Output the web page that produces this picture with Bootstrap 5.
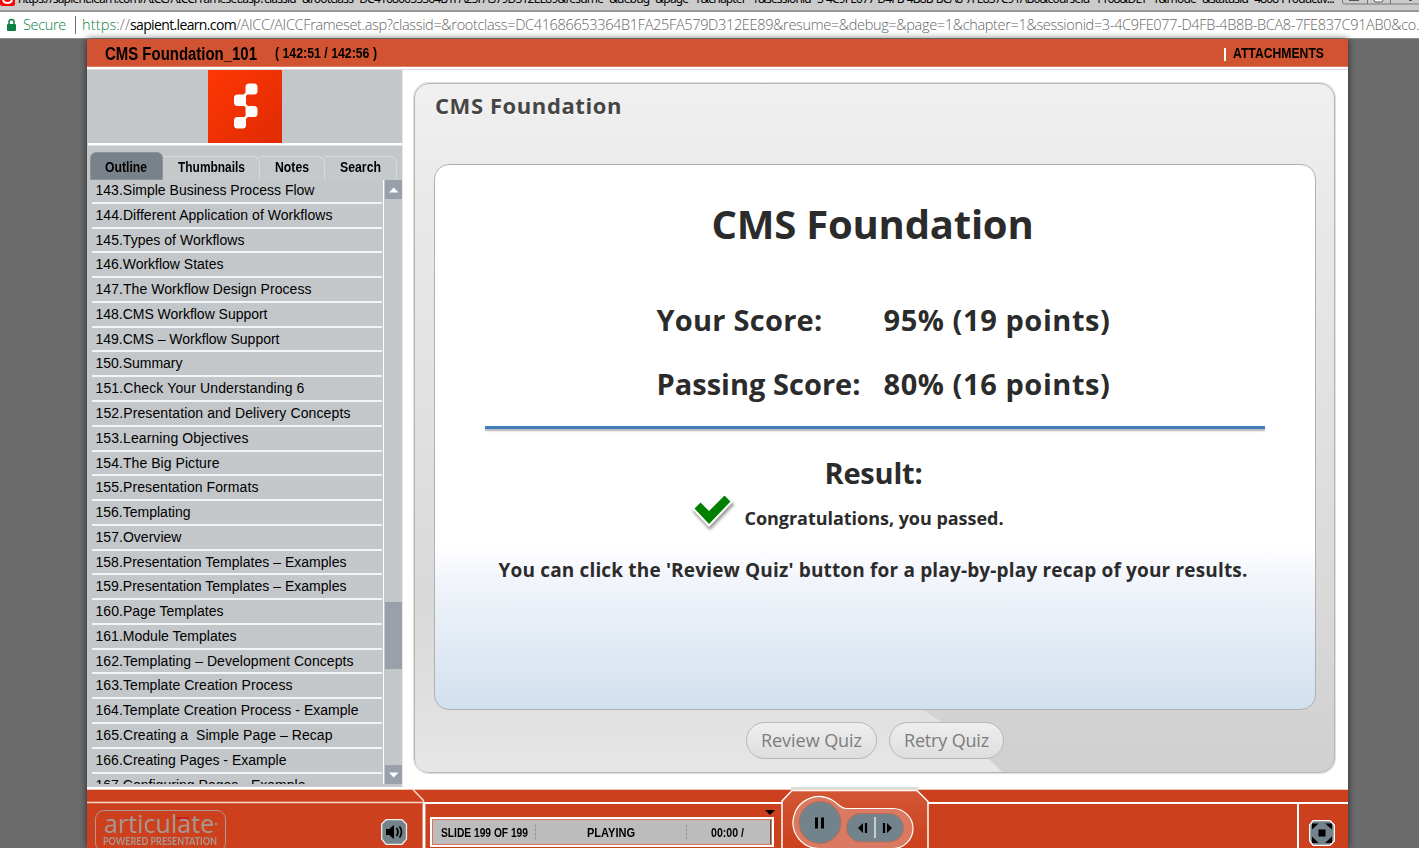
<!DOCTYPE html>
<html lang="en">
<head>
<meta charset="utf-8">
<title>CMS Foundation_101</title>
<link href="https://cdn.jsdelivr.net/npm/bootstrap@5.3.0/dist/css/bootstrap.min.css" rel="stylesheet">
<style>
body{height:848px;width:1419px;overflow:hidden;background:#6b6b6b;font-family:"Liberation Sans",sans-serif;color:#000}
.fit{display:inline-block;white-space:pre;transform-origin:0 50%}
.cond{font-family:"Liberation Sans Narrow","Liberation Sans",sans-serif;font-weight:700}
.hum{font-family:"Open Sans","Noto Sans",sans-serif;font-weight:700;color:#2b2b2b}
.tabstrip{height:12px;background:#cbcbcb;border-bottom:2px solid #999;font:12px/14px "DejaVu Sans","Noto Sans",sans-serif}
.tabstrip .fit{margin-left:3px;margin-top:-8px;font-family:"Noto Sans",sans-serif}
.urlbar{height:27px;border-bottom:1px solid #8f8f8f;font:300 14.5px/25px "Open Sans","Noto Sans",sans-serif;color:#666}
.green{color:#0b8043}
.player{width:1261px;height:809px;margin-left:87px;box-shadow:0 0 7px rgba(0,0,0,.65)}
.topbar{height:28px;padding-top:3px;background:#d25331;border-bottom:1px solid #e07a60}
.gap-line{height:3px;border-bottom:1px solid #ddd}
.side{width:316px;height:717px;background:#c4c7ca;border-right:1px solid #e6e8ea}
.logo-row{height:73px}
.logo-line{height:3px;background:#fff;border-bottom:1px solid #dfe1e3;margin-left:1px}
.tabs{height:34px;padding:6px 0 0 3px;font-size:14.5px;line-height:27px}
.tab-item{height:24px;border:1px solid #d8dadc;border-left:0;border-bottom:0;border-radius:0 7px 0 0;line-height:21px;background:#c6c9cc}
.tab-item.on{height:28px;background:#79818a;border:1px solid #8b939b;border-radius:6px 6px 0 0;line-height:29px}
.list-box{width:297px;height:604px;overflow:hidden;border-right:1px solid #fff;padding-left:5px}
.item{height:24.78px;width:290px;border-bottom:2px solid #f4f4f4;padding-left:3.5px;font-size:14px;line-height:22.6px}
.item:first-child{height:23.9px;line-height:21px}
.scroll{width:17px;height:604px;margin-left:1px}
.sbtn{height:19px;background:#99a0a9}
.thumb{height:67px;background:#99a0a9;margin-top:403px;margin-bottom:96px}
.panel{width:921px;height:690px;margin:13px 0 0 11px;border:1px solid #b5b5b5;border-radius:15px;background:linear-gradient(#f0f0f0,#e9e9e9 18%,#d9d9d9 75%,#d0d0d0);box-shadow:0 0 1px 1px #ddd}
.shine{left:0;bottom:0}
.heading{height:80px;padding:4px 0 0 20px;font-size:22px;line-height:34px;color:#454545;text-shadow:0 1px #fff}
.sheet{width:882px;height:546px;margin-left:18.5px;border:1px solid #b0b0b0;border-radius:15px;background:linear-gradient(#fff 70%,#f2f5fb 76%,#d2e0ee)}
.t1{height:80px;margin-top:19px;line-height:80px;font-size:40px;padding-left:277px}
.rowx{height:64px;line-height:64px;font-size:29px;padding-left:222px}
.rowx .lab{width:227px}
.rule{height:2.5px;width:780px;margin:10px 0 0 50px;background:#427cbd;box-shadow:0 2px 2px rgba(0,0,0,.3)}
.btn-q{height:37px;border:1.5px solid #b7b7b7;border-radius:19px;background:linear-gradient(#eee,#dedede);font:500 18px/35px "Open Sans",sans-serif;color:#7d7d7d;padding:0 0 0 14px}
.foot{height:59px;margin-top:2px;background:#cc401d}
.foot .art{left:0;top:0}
.lay{position:relative;height:59px}
.artic{width:131px;height:42px;margin:21px 0 0 8px;border:1px solid #a99a95;border-radius:9px;color:#a89791;padding-left:8px}
.word{height:24px;font:25px/24px "Open Sans",sans-serif}
.pow{height:12px;font:700 10.5px/12px Lato,sans-serif}
.status{width:344px;height:30px;margin-top:28px;border:2px solid #fff;outline:1px solid #dd7257;outline-offset:-3px;background:#bcbcbc;font-size:13px;line-height:27px}
.sep{border-left:1px dashed #999;height:16px;margin-top:5px}
</style>
<script src="https://cdn.jsdelivr.net/npm/bootstrap@5.3.0/dist/js/bootstrap.bundle.min.js"></script>
</head>
<body>
<div class="tabstrip d-flex overflow-hidden">
  <svg width="15" height="10"><rect x="0" y="-10" width="15" height="16" rx="2" fill="#f00"/><path d="M3 0C4 4 11 4 12 0" fill="none" stroke="#fff" stroke-width="2"/></svg>
  <span class="fit" data-w="1316">https://sapient.learn.com/AICC/AICCFrameset.asp?classid=&amp;rootclass=DC41686653364B1FA25FA579D312EE89&amp;resume=&amp;debug=&amp;page=1&amp;chapter=1&amp;sessionid=3-4C9FE077-D4FB-4B8B-BCA8-7FE837C91AB0&amp;courseid=1168&amp;DLT=1&amp;mode=&amp;statusid=4808-Productiv...</span>
  <svg class="ms-2" width="77" height="10"><path d="M.5 0v2q0 2 2 2H77M25.500 0v4M48.500 0v4" fill="none" stroke="#777"/><path d="M7 0h10v1H7zM67 0h3v1h-3z" fill="#555"/><rect x="32" y="-7" width="9" height="9" rx="2" fill="#fff" stroke="#555"/></svg>
</div>
<div class="urlbar d-flex bg-white">
  <svg width="22" height="26"><rect x="7" y="12" width="9" height="7" rx="1" fill="#0b8043"/><path d="M9 12V10a2.500 2.500 0 0 1 5 0v2" fill="none" stroke="#0b8043" stroke-width="1.500"/></svg>
  <span class="fit green" style="margin-left:1px" data-w="43">Secure</span>
  <span class="border-start border-secondary" style="height:18px;margin:4px 6px 0 9px"></span>
  <span class="fit" data-w="48"><span class="green">https</span>://</span><span class="fit text-black fw-normal" style="font-size:14px" data-w="106">sapient.learn.com</span><span class="fit" data-w="1183">/AICC/AICCFrameset.asp?classid=&amp;rootclass=DC41686653364B1FA25FA579D312EE89&amp;resume=&amp;debug=&amp;page=1&amp;chapter=1&amp;sessionid=3-4C9FE077-D4FB-4B8B-BCA8-7FE837C91AB0&amp;co.</span>
</div>
<div class="player bg-white">
  <div class="topbar d-flex align-items-center cond">
    <span class="fit sc" style="font-size:17.500px;margin-left:18px" data-w="152">CMS Foundation_101</span>
    <span style="width:18px"></span>
    <span class="fit sc" style="font-size:14.500px" data-w="102">( 142:51 / 142:56 )</span>
    <span class="ms-auto bg-white" style="width:2px;height:13px"></span>
    <span style="width:7px"></span>
    <span class="fit sc" style="font-size:14.500px" data-w="91">ATTACHMENTS</span><span style="width:24px"></span>
  </div>
  <div class="gap-line"></div>
  <div class="d-flex" style="height:717px">
    <div class="side">
      <div class="logo-row"><svg class="d-block" style="margin-left:121px" width="74" height="73"><defs><linearGradient id="lg" x2="1" y2="1"><stop stop-color="#ff3704"/><stop offset="1" stop-color="#df2b02"/></linearGradient></defs><rect width="74" height="73" fill="url(#lg)"/><g fill="#fff"><rect x="37.500" y="13.500" width="12" height="11" rx="3.500"/><rect x="26" y="24.500" width="12" height="11.500" rx="3.500"/><rect x="37.500" y="36" width="12" height="11" rx="3.500"/><rect x="26" y="47" width="12" height="11.500" rx="3.500"/></g><path d="M40 22l-4 4M36 34l4 4M40 45l-4 4" stroke="#fff" stroke-width="2.500"/></svg></div>
      <div class="logo-line"></div>
      <div class="tabs d-flex align-items-end cond">
        <div class="tab-item on" style="width:73px;padding-left:14px"><span class="fit sc" data-w="42">Outline</span></div>
        <div class="tab-item" style="width:97px;padding-left:15px"><span class="fit sc" data-w="67">Thumbnails</span></div>
        <div class="tab-item" style="width:65px;padding-left:15px"><span class="fit sc" data-w="34">Notes</span></div>
        <div class="tab-item" style="width:72px;padding-left:15px"><span class="fit sc" data-w="41">Search</span></div>
      </div>
      <div class="d-flex">
        <div class="list-box" id="outline"></div>
        <div class="scroll">
          <div class="sbtn"><svg class="d-block" width="17" height="19"><path d="M4 12.500h9.500L8.700 7.500z" fill="#fff"/></svg></div>
          <div class="thumb"></div>
          <div class="sbtn"><svg class="d-block" width="17" height="19"><path d="M4 7.500h9.500L8.700 12.500z" fill="#fff"/></svg></div>
        </div>
      </div>
    </div>
    <div class="panel position-relative">
      <svg class="shine position-absolute" width="919" height="173"><defs><linearGradient id="sh" x2="0" y2="1"><stop stop-color="#fff" stop-opacity="0"/><stop offset="1" stop-color="#fff" stop-opacity=".48"/></linearGradient></defs><path d="M0 0H300L503 108Q556 140 587 173H14Q0 173 0 159z" fill="url(#sh)"/></svg>
      <div class="position-relative">
      <div class="heading hum"><span class="fit" data-w="187">CMS Foundation</span></div>
      <div class="sheet hum">
        <div class="t1"><span class="fit" data-w="322">CMS Foundation</span></div>
        <div class="rowx d-flex" style="margin-top:24px"><div class="lab"><span class="fit" data-w="166">Your Score:</span></div><span class="fit" data-w="227">95% (19 points)</span></div>
        <div class="rowx d-flex"><div class="lab"><span class="fit" data-w="204">Passing Score:</span></div><span class="fit" data-w="227">80% (16 points)</span></div>
        <div class="rule"></div>
        <div style="height:46px;line-height:46px;margin-top:21.500px;font-size:29px;padding-left:390px"><span class="fit" data-w="98">Result:</span></div>
        <div class="d-flex" style="height:44px;line-height:44px;font-size:18px;padding-left:254px"><svg width="56" height="44" style="filter:drop-shadow(1px 3px 1.500px rgba(0,0,0,.4))"><path d="M5.500 12.500l6-6L20 15 35.500-.5l6 6L20 28z" fill="#008000" stroke="#fff" stroke-width="4" paint-order="stroke"/></svg><span class="fit" data-w="259">Congratulations, you passed.</span></div>
        <div style="height:44px;line-height:44px;margin-top:7.500px;font-size:19px;padding-left:64px"><span class="fit" data-w="749">You can click the 'Review Quiz' button for a play-by-play recap of your results.</span></div>
      </div>
      <div class="d-flex" style="margin:12px 0 0 331px;gap:12px">
        <button class="btn-q text-start" style="width:131px"><span class="fit" data-w="101">Review Quiz</span></button>
        <button class="btn-q text-start" style="width:115px"><span class="fit" data-w="85">Retry Quiz</span></button>
      </div>
      </div>
    </div>
  </div>
  <div class="foot position-relative">
    <svg class="art position-absolute overflow-visible" width="1261" height="59" viewBox="87 789 1261 59">
      <defs><linearGradient id="cg" x2="0" y2="1"><stop stop-color="#d25634"/><stop offset="1" stop-color="#cc401d"/></linearGradient></defs>
      <path d="M87 789.500H1348" stroke="#f1c5b9"/><path d="M791 788h127" stroke="#ddd" stroke-width="2"/>
      <path d="M87 802.500H423M413 789.500l10 10.500 1 2" fill="none" stroke="#f5d8cf" stroke-width="1.500"/>
      <path d="M424 848V803H782M928 803h420M1298 803v45" fill="none" stroke="#fff" stroke-width="2"/>
      <path d="M425.500 848V804M422.500 848V804" stroke="#e08f79"/>
      <path d="M782 849v-48l10-10.500h125l11 11V849" fill="url(#cg)" stroke="#fff" stroke-width="1.500"/>
      <path d="M820 848.500a26 26 0 1 1 12-48.500c6 3 8 8.500 14 8.500h47a20 20 0 0 1 0 40z" fill="#da7a62" stroke="#fff" stroke-width="1.200"/>
      <circle cx="820" cy="822.500" r="21" fill="#73838b" stroke="#c06a55"/>
      <path d="M816.500 817.500v11M822.500 817.500v11" stroke="#000" stroke-width="3"/>
      <rect x="846.500" y="813.500" width="57" height="28.500" rx="14.200" fill="#73838b" stroke="#c06a55"/>
      <path d="M875 817v21" stroke="#c5cdd0" stroke-width="2"/>
      <path d="M858 828l5-5v10zM887 823v10l5-5z"/><path d="M866 823v10M884 823v10" stroke="#000" stroke-width="2.200"/>
      <path d="M765 810h10l-5 5z"/>
      <g transform="translate(381 819)"><path d="M5 .7h16l4.500 4.500v15L21 25.300H5L.7 20V5z" fill="#73838b" stroke="#eee" stroke-width="1.300"/><path d="M5 10h3l5-4v14l-5-4H5z"/><path d="M15.500 9q3 4 0 8M18.500 7.500q4 5.500 0 11" fill="none" stroke="#000" stroke-width="1.700"/></g>
      <g transform="translate(1309 820)"><path d="M4 .7h17l4.300 4.300v16L21 25.300H4L.7 21V5z" fill="#73838b" stroke="#fff" stroke-width="1.300"/><path d="M9.500 9.500h7v7h-7zM3 3.500h6.500L3 9.500zM16 3.500h7v6zM3 16.500v6.500h6.500zM23 16.500v6.500h-7z"/></g>
    </svg>
    <div class="lay d-flex">
      <div class="artic">
        <div class="word"><span class="fit" data-w="114">articulate<span style="font-size:13px;vertical-align:5px;font-weight:700">·</span></span></div>
        <div class="pow" style="margin-left:-1px"><span class="fit sc" data-w="114">POWERED PRESENTATION</span></div>
      </div>
      <div class="position-absolute" style="left:89px;top:28px;width:13px;height:2px;background:#bf211b"></div>
      <div style="width:204px"></div>
      <div class="status cond d-flex">
        <span class="fit sc" style="margin-left:9px" data-w="87">SLIDE 199 OF 199</span>
        <span style="width:7px"></span><span class="sep"></span><span style="width:51px"></span>
        <span class="fit sc" data-w="48">PLAYING</span>
        <span style="width:51px"></span><span class="sep"></span><span style="width:24px"></span>
        <span class="fit sc" data-w="33">00:00 /</span>
        <span class="ms-auto" style="width:2px;background:#555"></span>
      </div>
    </div>
  </div>
</div>
<script>
// Outline entries: title and rendered width of the row text
var rows=[["Simple Business Process Flow",219],["Different Application of Workflows",237],["Types of Workflows",149],["Workflow States",128],["The Workflow Design Process",216],["CMS Workflow Support",172],["CMS – Workflow Support",184],["Summary",87],["Check Your Understanding 6",209],["Presentation and Delivery Concepts",255],["Learning Objectives",153],["The Big Picture",124],["Presentation Formats",163],["Templating",95],["Overview",86],["Presentation Templates – Examples",251],["Presentation Templates – Examples",251],["Page Templates",128],["Module Templates",141],["Templating – Development Concepts",258],["Template Creation Process",197],["Template Creation Process - Example",263],["Creating a  Simple Page – Recap",237],["Creating Pages - Example",191],["Configuring Pages - Example",210]];
document.getElementById("outline").innerHTML=rows.map(function(r,i){return '<div class="item"><span class="fit" data-w="'+r[1]+'">'+(143+i)+'.'+r[0]+'</span></div>'}).join("");
// Condensed labels are scaled to their column; the rest are tracked
document.querySelectorAll(".fit").forEach(function(e){
  var t=+e.dataset.w,w=e.getBoundingClientRect().width;
  if(e.classList.contains("sc")){e.style.transform="scaleX("+t/w+")";e.style.marginRight=(t-w)+"px";}
  else e.style.letterSpacing=((t-w)/e.textContent.length)+"px";
});
</script>
</body>
</html>
